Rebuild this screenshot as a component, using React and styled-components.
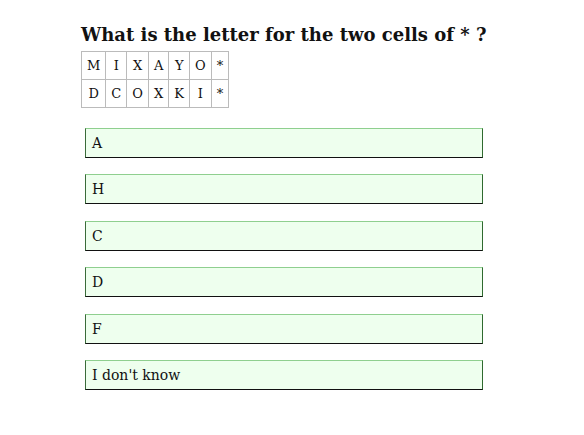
import React from 'react'
import { styled, createGlobalStyle } from 'styled-components'

const GlobalStyle = createGlobalStyle`
    body {
        margin: 0;
        background: #ffffff;
        font-family: "DejaVu Serif", Georgia, serif;
        color: #111111;
    }
`

const Page = styled.div`
    padding: 21px 0 0 81px;
    width: 420px;
`

const Question = styled.h1`
    margin: 0 0 3px 0;
    font-size: 18px;
    font-weight: bold;
    line-height: 27px;
    white-space: nowrap;
`

const Grid = styled.table`
    border-collapse: collapse;
    margin-bottom: 20px;
`

const Cell = styled.td`
    border: 1px solid #bbbbbb;
    height: 27px;
    padding: 0 5px;
    font-size: 13px;
    text-align: center;
    vertical-align: middle;
`

const Answers = styled.div`
    display: flex;
    flex-direction: column;
    gap: 16.4px;
    padding-left: 4px;
`

const Answer = styled.div`
    box-sizing: border-box;
    width: 398px;
    height: 30px;
    padding: 0 6px;
    display: flex;
    align-items: center;
    background: #eeffee;
    border-style: solid;
    border-width: 1px;
    border-color: #8fcf8f #2f6a2f #111111 #3a6b3a;
    font-size: 14px;
`

const rows = [
    ['M', 'I', 'X', 'A', 'Y', 'O', '*'],
    ['D', 'C', 'O', 'X', 'K', 'I', '*'],
]

const options = ['A', 'H', 'C', 'D', 'F', "I don't know"]

export default function App() {
    return (
        <Page>
            <GlobalStyle />
            <Question>What is the letter for the two cells of * ?</Question>
            <Grid>
                <tbody>
                    {rows.map((row, i) => (
                        <tr key={i}>
                            {row.map((c, j) => (
                                <Cell key={j}>{c}</Cell>
                            ))}
                        </tr>
                    ))}
                </tbody>
            </Grid>
            <Answers>
                {options.map((o) => (
                    <Answer key={o}>{o}</Answer>
                ))}
            </Answers>
        </Page>
    )
}
